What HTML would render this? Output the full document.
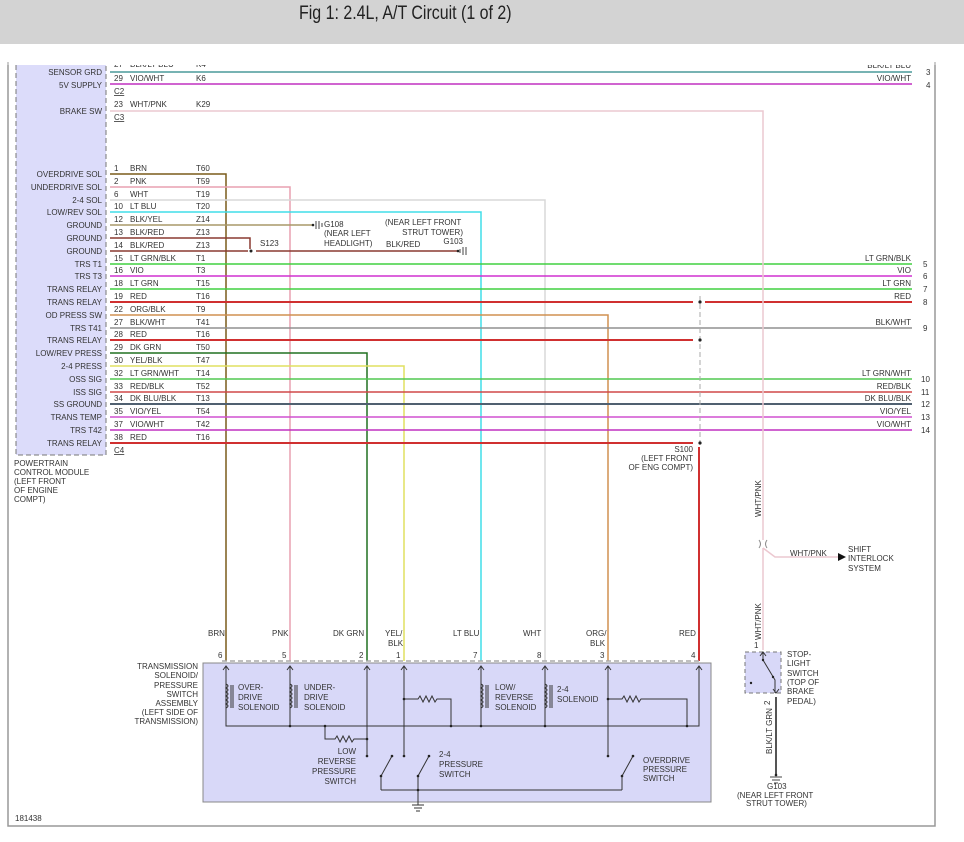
<!DOCTYPE html>
<html><head><meta charset="utf-8"><style>
html,body{margin:0;padding:0;background:#fff;width:964px;height:842px;overflow:hidden}
.hdr{position:absolute;left:0;top:0;width:964px;height:44px;background:#d3d3d3}
.ttl{position:absolute;left:299px;top:3px;white-space:nowrap;font:19px "Liberation Sans",sans-serif;color:#222;transform:scaleX(.84);transform-origin:0 0}
svg{position:absolute;left:0;top:0}
text{font-family:"Liberation Sans",sans-serif;font-size:8px;fill:#333}
.r{text-anchor:end}
</style></head><body>
<div class="hdr"></div><div class="ttl">Fig 1: 2.4L, A/T Circuit (1 of 2)</div>
<svg width="964" height="842" viewBox="0 0 964 842">
<path d="M8 62 V826 H935 V62" fill="none" stroke="#999" stroke-width="1.5"/>
<rect x="16" y="60" width="90" height="395" fill="#dcdcfa" stroke="#777" stroke-dasharray="5,3"/>
<g>
<text x="102" y="75" class="r">SENSOR GRD</text><text x="102" y="88" class="r">5V SUPPLY</text><text x="102" y="114" class="r">BRAKE SW</text>
<text x="102" y="177" class="r">OVERDRIVE SOL</text><text x="102" y="190" class="r">UNDERDRIVE SOL</text><text x="102" y="203" class="r">2-4 SOL</text><text x="102" y="215" class="r">LOW/REV SOL</text>
<text x="102" y="228" class="r">GROUND</text><text x="102" y="241" class="r">GROUND</text><text x="102" y="254" class="r">GROUND</text><text x="102" y="267" class="r">TRS T1</text>
<text x="102" y="279" class="r">TRS T3</text><text x="102" y="292" class="r">TRANS RELAY</text><text x="102" y="305" class="r">TRANS RELAY</text><text x="102" y="318" class="r">OD PRESS SW</text>
<text x="102" y="331" class="r">TRS T41</text><text x="102" y="343" class="r">TRANS RELAY</text><text x="102" y="356" class="r">LOW/REV PRESS</text><text x="102" y="369" class="r">2-4 PRESS</text>
<text x="102" y="382" class="r">OSS SIG</text><text x="102" y="395" class="r">ISS SIG</text><text x="102" y="407" class="r">SS GROUND</text><text x="102" y="420" class="r">TRANS TEMP</text>
<text x="102" y="433" class="r">TRS T42</text><text x="102" y="446" class="r">TRANS RELAY</text>
</g>
<text x="14" y="466">POWERTRAIN</text><text x="14" y="475">CONTROL MODULE</text><text x="14" y="484">(LEFT FRONT</text><text x="14" y="493">OF ENGINE</text><text x="14" y="502">COMPT)</text>
<g fill="none" stroke-width="1.5">
<path d="M110 174H226V661" stroke="#7a5c1a"/>
<path d="M110 187H290V661" stroke="#e8a0b0"/>
<path d="M110 200H545V661" stroke="#d8d8d8"/>
<path d="M110 212H481V661" stroke="#40dde8"/>
<path d="M110 225H312" stroke="#a89868"/>
<path d="M110 238H250V249" stroke="#8a3a30"/>
<path d="M110 251H248M256 251H458" stroke="#8a3a30"/>
<path d="M110 264H912" stroke="#40d040"/>
<path d="M110 276H912" stroke="#d030d0"/>
<path d="M110 289H912" stroke="#40d040"/>
<path d="M110 302H693M705 302H912" stroke="#d03030" stroke-width="2"/>
<path d="M110 315H608V661" stroke="#d09050"/>
<path d="M110 328H912" stroke="#909090"/>
<path d="M110 340H693" stroke="#d03030" stroke-width="2"/>
<path d="M110 353H367V661" stroke="#207020"/>
<path d="M110 366H404V661" stroke="#e0e060"/>
<path d="M110 379H912" stroke="#50c850"/>
<path d="M110 392H912" stroke="#d04848"/>
<path d="M110 404H912" stroke="#506070" stroke-width="2"/>
<path d="M110 417H912" stroke="#d050d0"/>
<path d="M110 430H912" stroke="#c030c0"/>
<path d="M110 443H693" stroke="#d03030" stroke-width="2"/>
<path d="M699 447V661" stroke="#d03030" stroke-width="2"/>
<path d="M110 72H912" stroke="#4a9a9a"/>
<path d="M110 84H912" stroke="#c030c0"/>
<path d="M110 111H763V540M763 548V650M763 548L775 557H838" stroke="#ecc8d0"/>
<path d="M776 697V775" stroke="#555" stroke-width="2"/>
</g>
<path d="M700 296V443" stroke="#aaa" stroke-dasharray="5,3"/>
<g fill="#222"><circle cx="700" cy="302" r="1.6"/><circle cx="700" cy="340" r="1.6"/><circle cx="700" cy="443" r="1.6"/><circle cx="251" cy="251" r="1.5"/></g>
<g>
<text x="114" y="67">27</text><text x="130" y="67">BLK/LT BLU</text><text x="196" y="67">K4</text>
<text x="114" y="81">29</text><text x="130" y="81">VIO/WHT</text><text x="196" y="81">K6</text>
<text x="114" y="94" text-decoration="underline">C2</text>
<text x="114" y="107">23</text><text x="130" y="107">WHT/PNK</text><text x="196" y="107">K29</text>
<text x="114" y="120" text-decoration="underline">C3</text>
<text x="114" y="171">1</text><text x="130" y="171">BRN</text><text x="196" y="171">T60</text>
<text x="114" y="184">2</text><text x="130" y="184">PNK</text><text x="196" y="184">T59</text>
<text x="114" y="197">6</text><text x="130" y="197">WHT</text><text x="196" y="197">T19</text>
<text x="114" y="209">10</text><text x="130" y="209">LT BLU</text><text x="196" y="209">T20</text>
<text x="114" y="222">12</text><text x="130" y="222">BLK/YEL</text><text x="196" y="222">Z14</text>
<text x="114" y="235">13</text><text x="130" y="235">BLK/RED</text><text x="196" y="235">Z13</text>
<text x="114" y="248">14</text><text x="130" y="248">BLK/RED</text><text x="196" y="248">Z13</text>
<text x="114" y="261">15</text><text x="130" y="261">LT GRN/BLK</text><text x="196" y="261">T1</text>
<text x="114" y="273">16</text><text x="130" y="273">VIO</text><text x="196" y="273">T3</text>
<text x="114" y="286">18</text><text x="130" y="286">LT GRN</text><text x="196" y="286">T15</text>
<text x="114" y="299">19</text><text x="130" y="299">RED</text><text x="196" y="299">T16</text>
<text x="114" y="312">22</text><text x="130" y="312">ORG/BLK</text><text x="196" y="312">T9</text>
<text x="114" y="325">27</text><text x="130" y="325">BLK/WHT</text><text x="196" y="325">T41</text>
<text x="114" y="337">28</text><text x="130" y="337">RED</text><text x="196" y="337">T16</text>
<text x="114" y="350">29</text><text x="130" y="350">DK GRN</text><text x="196" y="350">T50</text>
<text x="114" y="363">30</text><text x="130" y="363">YEL/BLK</text><text x="196" y="363">T47</text>
<text x="114" y="376">32</text><text x="130" y="376">LT GRN/WHT</text><text x="196" y="376">T14</text>
<text x="114" y="389">33</text><text x="130" y="389">RED/BLK</text><text x="196" y="389">T52</text>
<text x="114" y="401">34</text><text x="130" y="401">DK BLU/BLK</text><text x="196" y="401">T13</text>
<text x="114" y="414">35</text><text x="130" y="414">VIO/YEL</text><text x="196" y="414">T54</text>
<text x="114" y="427">37</text><text x="130" y="427">VIO/WHT</text><text x="196" y="427">T42</text>
<text x="114" y="440">38</text><text x="130" y="440">RED</text><text x="196" y="440">T16</text>
<text x="114" y="453" text-decoration="underline">C4</text>
</g>
<g>
<text x="911" y="68" class="r">BLK/LT BLU</text><text x="926" y="75">3</text>
<text x="911" y="81" class="r">VIO/WHT</text><text x="926" y="88">4</text>
<text x="911" y="261" class="r">LT GRN/BLK</text><text x="923" y="267">5</text>
<text x="911" y="273" class="r">VIO</text><text x="923" y="279">6</text>
<text x="911" y="286" class="r">LT GRN</text><text x="923" y="292">7</text>
<text x="911" y="299" class="r">RED</text><text x="923" y="305">8</text>
<text x="911" y="325" class="r">BLK/WHT</text><text x="923" y="331">9</text>
<text x="911" y="376" class="r">LT GRN/WHT</text><text x="921" y="382">10</text>
<text x="911" y="389" class="r">RED/BLK</text><text x="921" y="395">11</text>
<text x="911" y="401" class="r">DK BLU/BLK</text><text x="921" y="407">12</text>
<text x="911" y="414" class="r">VIO/YEL</text><text x="921" y="420">13</text>
<text x="911" y="427" class="r">VIO/WHT</text><text x="921" y="433">14</text>
</g>
<rect x="0" y="44" width="964" height="21" fill="#fff"/>
<path d="M8 65V62M935 65V62" stroke="#999"/>
<g stroke="#444" fill="none"><path d="M316 221V229M319 221V229M322 223V227"/><path d="M466 247V255M463 247V255M460 249V253"/></g>
<circle cx="313" cy="225" r="1.3" fill="#222"/><circle cx="458" cy="251" r="1.3" fill="#222"/>
<text x="324" y="227">G108</text><text x="324" y="236">(NEAR LEFT</text><text x="324" y="246">HEADLIGHT)</text>
<text x="385" y="225">(NEAR LEFT FRONT</text><text x="463" y="235" class="r">STRUT TOWER)</text>
<text x="463" y="244" class="r">G103</text><text x="386" y="247">BLK/RED</text>
<text x="260" y="246">S123</text>
<text x="693" y="452" class="r">S100</text><text x="693" y="461" class="r">(LEFT FRONT</text><text x="693" y="470" class="r">OF ENG COMPT)</text>
<text x="0" y="0" transform="translate(761,517) rotate(-90)">WHT/PNK</text>
<text x="0" y="0" transform="translate(761,640) rotate(-90)">WHT/PNK</text>
<path d="M759 540q3 4 0 8M767 540q-3 4 0 8" stroke="#888" fill="none"/>
<text x="790" y="556">WHT/PNK</text>
<path d="M838 553L846 557L838 561Z" fill="#111"/>
<text x="848" y="552">SHIFT</text><text x="848" y="561">INTERLOCK</text><text x="848" y="571">SYSTEM</text>
<rect x="745" y="652" width="36" height="41" fill="#d8d8f8" stroke="#777" stroke-dasharray="4,3"/>
<path d="M763 652V660L775 680V693M760 656l3-4 3 4M773 689l3 4 3-4" stroke="#333" fill="none"/>
<circle cx="751" cy="683" r="1.2" fill="#222"/><circle cx="763" cy="660" r="1.2" fill="#222"/><circle cx="773" cy="677" r="1.2" fill="#222"/>
<text x="754" y="648">1</text><text x="0" y="0" transform="translate(770,705) rotate(-90)">2</text>
<text x="0" y="0" transform="translate(772,754) rotate(-90)">BLK/LT GRN</text>
<text x="787" y="657">STOP-</text><text x="787" y="666">LIGHT</text><text x="787" y="676">SWITCH</text><text x="787" y="685">(TOP OF</text><text x="787" y="694">BRAKE</text><text x="787" y="704">PEDAL)</text>
<path d="M770 777H782M772 780H780M774 783H778" stroke="#444"/><circle cx="776" cy="775" r="1.3" fill="#222"/>
<text x="767" y="789">G103</text><text x="737" y="798">(NEAR LEFT FRONT</text><text x="746" y="806">STRUT TOWER)</text>
<rect x="203" y="663" width="508" height="139" fill="#d8d8f8" stroke="#888"/>
<path d="M222 661H702" stroke="#aaa" stroke-dasharray="5,3" stroke-width="1.5"/>
<g>
<text x="198" y="669" class="r">TRANSMISSION</text><text x="198" y="678" class="r">SOLENOID/</text><text x="198" y="688" class="r">PRESSURE</text><text x="198" y="697" class="r">SWITCH</text><text x="198" y="706" class="r">ASSEMBLY</text><text x="198" y="715" class="r">(LEFT SIDE OF</text><text x="198" y="724" class="r">TRANSMISSION)</text>
</g>
<text x="208" y="636">BRN</text><text x="272" y="636">PNK</text><text x="333" y="636">DK GRN</text><text x="385" y="636">YEL/</text><text x="388" y="646">BLK</text>
<text x="453" y="636">LT BLU</text><text x="523" y="636">WHT</text><text x="586" y="636">ORG/</text><text x="590" y="646">BLK</text><text x="679" y="636">RED</text>
<text x="218" y="658">6</text><text x="282" y="658">5</text><text x="359" y="658">2</text><text x="396" y="658">1</text><text x="473" y="658">7</text><text x="537" y="658">8</text><text x="600" y="658">3</text><text x="691" y="658">4</text>
<g stroke="#333" fill="none" stroke-width="1">
<path d="M226 666V726H699V666"/>
<path d="M290 666V726M367 666V756M404 666V756M481 666V726M545 666V726M608 666V756"/>
<path d="M223 670l3-4 3 4M287 670l3-4 3 4M364 670l3-4 3 4M401 670l3-4 3 4M478 670l3-4 3 4M542 670l3-4 3 4M605 670l3-4 3 4M696 670l3-4 3 4"/>
<path d="M226 684q4 2 0 4q4 2 0 4q4 2 0 4q4 2 0 4q4 2 0 4q4 2 0 4M231 685V708M233 685V708"/>
<path d="M290 684q4 2 0 4q4 2 0 4q4 2 0 4q4 2 0 4q4 2 0 4q4 2 0 4M295 685V708M297 685V708"/>
<path d="M481 684q4 2 0 4q4 2 0 4q4 2 0 4q4 2 0 4q4 2 0 4q4 2 0 4M486 685V708M488 685V708"/>
<path d="M545 684q4 2 0 4q4 2 0 4q4 2 0 4q4 2 0 4q4 2 0 4q4 2 0 4M550 685V708M552 685V708"/>
<path d="M325 726V739H335l2-3 3 6 3-6 3 6 3-6 3 6 2-3H367"/>
<path d="M404 699H418l2-3 3 6 3-6 3 6 3-6 3 6 2-3H451V726"/>
<path d="M608 699H622l2-3 3 6 3-6 3 6 3-6 3 6 2-3H687V726"/>
<path d="M381 790V776L392 756M418 790V776L429 756M622 790V776L633 756M381 790H622M418 790V805"/>
<path d="M412 805H424M414 808H422M416 811H420"/>
</g>
<g fill="#222"><circle cx="290" cy="726" r="1.3"/><circle cx="325" cy="726" r="1.3"/><circle cx="451" cy="726" r="1.3"/><circle cx="481" cy="726" r="1.3"/><circle cx="545" cy="726" r="1.3"/><circle cx="687" cy="726" r="1.3"/><circle cx="367" cy="739" r="1.3"/><circle cx="404" cy="699" r="1.3"/><circle cx="608" cy="699" r="1.3"/><circle cx="367" cy="756" r="1.3"/><circle cx="404" cy="756" r="1.3"/><circle cx="608" cy="756" r="1.3"/><circle cx="381" cy="776" r="1.3"/><circle cx="392" cy="756" r="1.3"/><circle cx="418" cy="776" r="1.3"/><circle cx="429" cy="756" r="1.3"/><circle cx="622" cy="776" r="1.3"/><circle cx="633" cy="756" r="1.3"/><circle cx="418" cy="790" r="1.3"/></g>
<text x="238" y="690">OVER-</text><text x="238" y="700">DRIVE</text><text x="238" y="710">SOLENOID</text>
<text x="304" y="690">UNDER-</text><text x="304" y="700">DRIVE</text><text x="304" y="710">SOLENOID</text>
<text x="495" y="690">LOW/</text><text x="495" y="700">REVERSE</text><text x="495" y="710">SOLENOID</text>
<text x="557" y="692">2-4</text><text x="557" y="702">SOLENOID</text>
<text x="356" y="754" class="r">LOW</text><text x="356" y="764" class="r">REVERSE</text><text x="356" y="774" class="r">PRESSURE</text><text x="356" y="784" class="r">SWITCH</text>
<text x="439" y="757">2-4</text><text x="439" y="767">PRESSURE</text><text x="439" y="777">SWITCH</text>
<text x="643" y="763">OVERDRIVE</text><text x="643" y="772">PRESSURE</text><text x="643" y="781">SWITCH</text>
<text x="15" y="821">181438</text>
</svg>
</body></html>
